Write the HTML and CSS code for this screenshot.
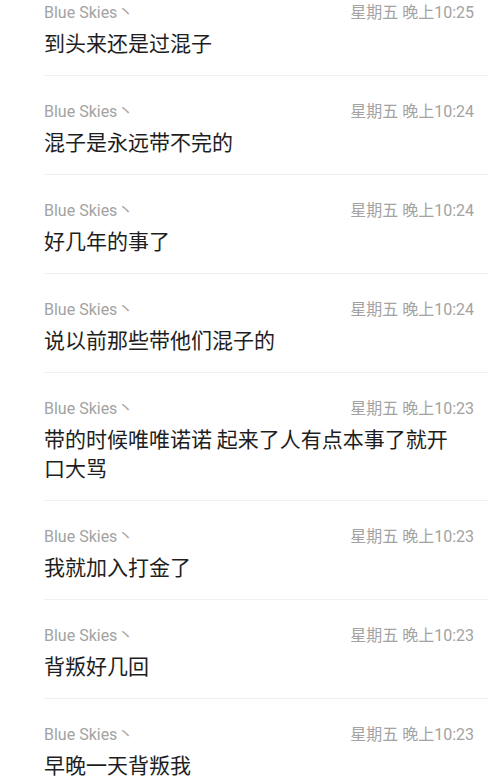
FILE: index.html
```html
<!DOCTYPE html>
<html lang="zh-CN">
<head>
  <meta charset="UTF-8" />
  <meta name="viewport" content="width=device-width, initial-scale=1.0" />
  <title>聊天记录</title>
  <link rel="stylesheet" href="styles.css">
</head>
<body>
  <main class="list">
    <div class="msg">
      <div class="meta"><span class="name">Blue Skies丶</span><span class="time">星期五 晚上10:25</span></div>
      <p class="text">到头来还是过混子</p>
    </div>
    <div class="msg">
      <div class="meta"><span class="name">Blue Skies丶</span><span class="time">星期五 晚上10:24</span></div>
      <p class="text">混子是永远带不完的</p>
    </div>
    <div class="msg">
      <div class="meta"><span class="name">Blue Skies丶</span><span class="time">星期五 晚上10:24</span></div>
      <p class="text">好几年的事了</p>
    </div>
    <div class="msg">
      <div class="meta"><span class="name">Blue Skies丶</span><span class="time">星期五 晚上10:24</span></div>
      <p class="text">说以前那些带他们混子的</p>
    </div>
    <div class="msg">
      <div class="meta"><span class="name">Blue Skies丶</span><span class="time">星期五 晚上10:23</span></div>
      <p class="text">带的时候唯唯诺诺 起来了人有点本事了就开口大骂</p>
    </div>
    <div class="msg">
      <div class="meta"><span class="name">Blue Skies丶</span><span class="time">星期五 晚上10:23</span></div>
      <p class="text">我就加入打金了</p>
    </div>
    <div class="msg">
      <div class="meta"><span class="name">Blue Skies丶</span><span class="time">星期五 晚上10:23</span></div>
      <p class="text">背叛好几回</p>
    </div>
    <div class="msg">
      <div class="meta"><span class="name">Blue Skies丶</span><span class="time">星期五 晚上10:23</span></div>
      <p class="text">早晚一天背叛我</p>
    </div>
  </main>
</body>
</html>
```

FILE: styles.css
```css
body {
  font-family: Roboto, "Noto Sans CJK SC", sans-serif;
  background-color: #ffffff;
  color: #222;
  margin: 0;
  padding: 0;
  overflow: hidden;
}
.list {
  margin-top: -23px;
  margin-left: 44px;
}
.msg {
  padding: 24px 14px 18px 0;
  border-bottom: 1px solid #f0f0f0;
}
.meta {
  display: flex;
  justify-content: space-between;
  align-items: center;
  height: 20px;
  font-size: 16px;
  color: #a3a3a3;
}
.text {
  margin: 7px 0 0;
  padding-right: 16px;
  font-family: "Noto Sans CJK SC", sans-serif;
  font-size: 21px;
  line-height: 29px;
  color: #1e1e1e;
}
```
